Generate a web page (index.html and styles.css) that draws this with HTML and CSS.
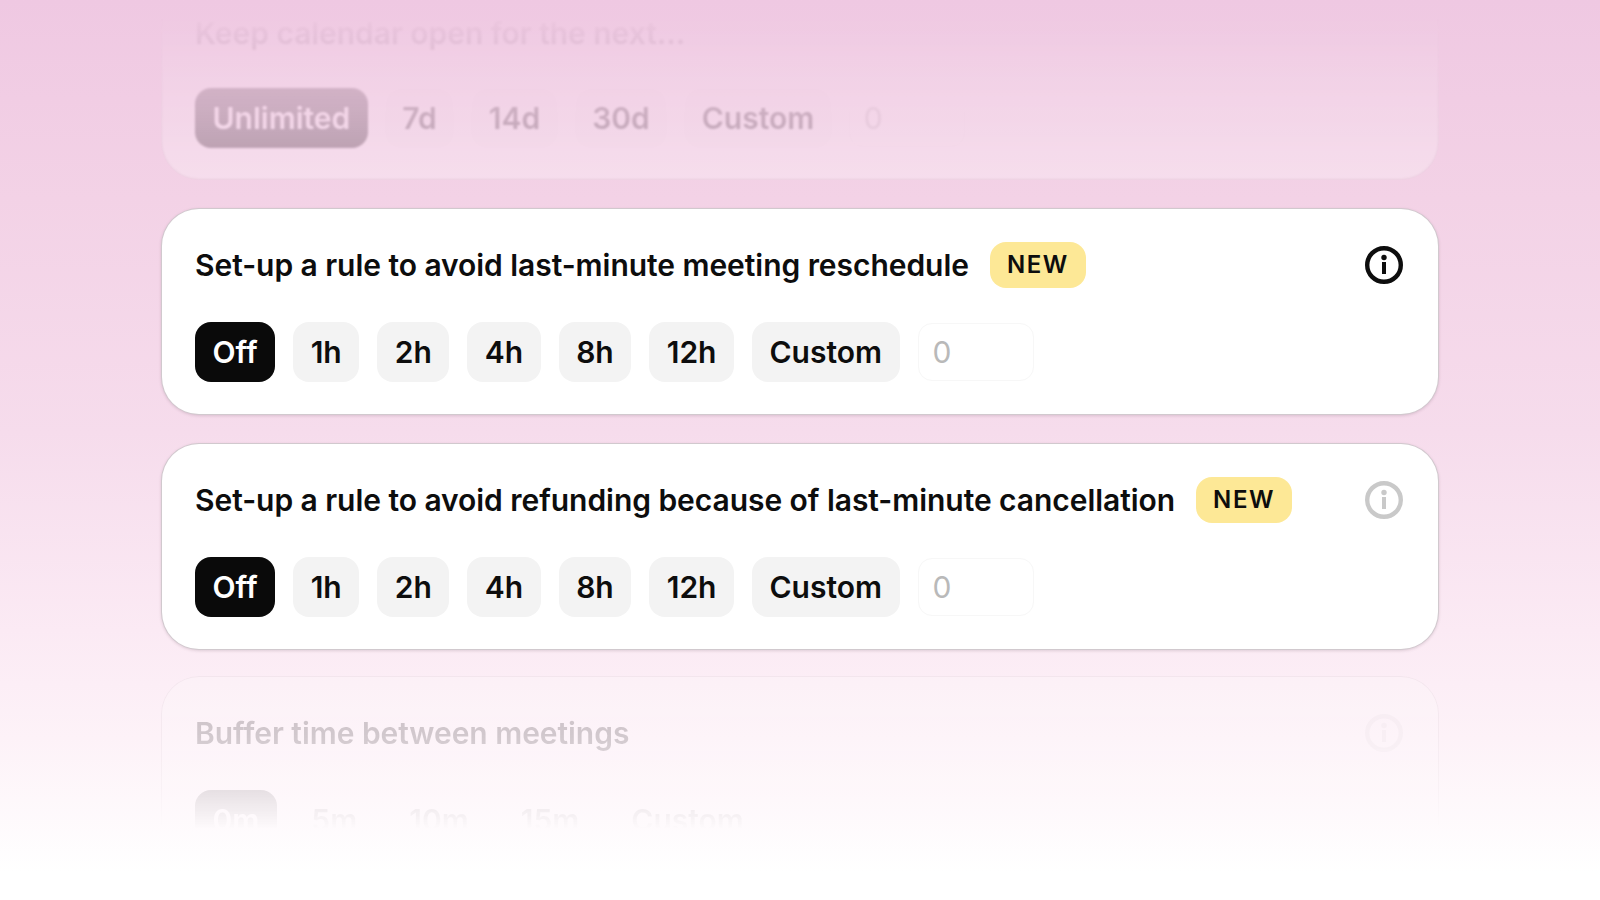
FILE: index.html
```html
<!DOCTYPE html>
<html lang="en">
<head>
    <meta charset="UTF-8">
    <meta name="viewport" content="width=device-width, initial-scale=1.0">
    <title>Booking rules</title>
    <link rel="stylesheet" href="styles.css">
</head>
<body>

    <div class="stack">

        <div class="card card-top">
            <div class="card-head">
                <span class="card-title">Keep calendar open for the next...</span>
            </div>
            <div class="options">
                <span class="pill active">Unlimited</span>
                <span class="pill">7d</span>
                <span class="pill">14d</span>
                <span class="pill">30d</span>
                <span class="pill">Custom</span>
                <span class="field">0</span>
            </div>
        </div>

        <div class="card">
            <div class="card-head">
                <span class="card-title">Set-up a rule to avoid last-minute meeting reschedule</span>
                <span class="badge">NEW</span>
                <svg class="info" viewBox="0 0 38 38" aria-hidden="true">
                    <circle cx="19" cy="19" r="16.8" fill="none" stroke="currentColor" stroke-width="4.4"/>
                    <circle cx="19" cy="11.5" r="2.7" fill="currentColor"/>
                    <rect x="17" y="16" width="4" height="12" fill="currentColor"/>
                </svg>
            </div>
            <div class="options">
                <span class="pill active">Off</span>
                <span class="pill">1h</span>
                <span class="pill">2h</span>
                <span class="pill">4h</span>
                <span class="pill">8h</span>
                <span class="pill">12h</span>
                <span class="pill">Custom</span>
                <span class="field">0</span>
            </div>
        </div>

        <div class="card">
            <div class="card-head">
                <span class="card-title">Set-up a rule to avoid refunding because of last-minute cancellation</span>
                <span class="badge">NEW</span>
                <svg class="info muted" viewBox="0 0 38 38" aria-hidden="true">
                    <circle cx="19" cy="19" r="16.8" fill="none" stroke="currentColor" stroke-width="4.4"/>
                    <circle cx="19" cy="11.5" r="2.7" fill="currentColor"/>
                    <rect x="17" y="16" width="4" height="12" fill="currentColor"/>
                </svg>
            </div>
            <div class="options">
                <span class="pill active">Off</span>
                <span class="pill">1h</span>
                <span class="pill">2h</span>
                <span class="pill">4h</span>
                <span class="pill">8h</span>
                <span class="pill">12h</span>
                <span class="pill">Custom</span>
                <span class="field">0</span>
            </div>
        </div>

        <div class="card card-bottom">
            <div class="card-head">
                <span class="card-title">Buffer time between meetings</span>
                <svg class="info muted" viewBox="0 0 38 38" aria-hidden="true">
                    <circle cx="19" cy="19" r="16.8" fill="none" stroke="currentColor" stroke-width="4.4"/>
                    <circle cx="19" cy="11.5" r="2.7" fill="currentColor"/>
                    <rect x="17" y="16" width="4" height="12" fill="currentColor"/>
                </svg>
            </div>
            <div class="options">
                <span class="pill active">0m</span>
                <span class="pill">5m</span>
                <span class="pill">10m</span>
                <span class="pill">15m</span>
                <span class="pill">Custom</span>
            </div>
        </div>

    </div>

</body>
</html>
```

FILE: styles.css
```css
* {
    box-sizing: border-box;
}
html, body {
    margin: 0;
    height: 100%;
}
body {
    font-family: 'Inter', 'Liberation Sans', sans-serif;
    color: #0d0d0d;
    overflow: hidden;
    background: linear-gradient(to bottom, #efc8e2 0%, #f3d2e6 22%, #f6dcec 48%, #fbeaf4 70%, #fdf2f8 82%, #ffffff 97%);
}
.stack {
    display: flex;
    flex-direction: column;
    gap: 28px;
    width: 1278px;
    margin: -27px auto 0;
}
.card {
    height: 207px;
    padding: 32px 33px 0;
    background: #fff;
    border: 1px solid rgba(90, 60, 80, 0.28);
    border-radius: 38px;
    box-shadow: 0 1px 3px rgba(90, 60, 80, 0.18);
}
.card-head {
    display: flex;
    align-items: center;
    height: 48px;
}
.card-title {
    font-size: 30px;
    font-weight: 600;
    letter-spacing: -0.05px;
    white-space: nowrap;
}
.badge {
    margin-left: 21px;
    padding: 0 17px;
    height: 46px;
    line-height: 46px;
    background: #fde896;
    border-radius: 16px;
    font-size: 24px;
    font-weight: 600;
    letter-spacing: 1.6px;
}
.info {
    width: 38px;
    height: 38px;
    margin-left: auto;
    margin-right: 2px;
}
.info.muted {
    color: #c9c9c9;
}
.options {
    display: flex;
    gap: 18px;
    margin-top: 33px;
}
.pill {
    height: 60px;
    line-height: 60px;
    padding: 0 17.5px;
    background: #f3f3f3;
    border-radius: 16px;
    font-size: 30px;
    font-weight: 600;
}
.pill.active {
    background: #0a0a0a;
    color: #fff;
}
.field {
    width: 116px;
    height: 58px;
    margin-top: 1px;
    line-height: 56px;
    padding: 0 14px;
    border: 1px solid #f7f7f7;
    border-radius: 14px;
    font-size: 30px;
    color: #b9b9b9;
}
.card-top {
    filter: blur(1px);
    -webkit-mask-image: linear-gradient(to bottom, rgba(0,0,0,0) 18%, rgba(0,0,0,0.04) 30%, rgba(0,0,0,0.12) 52%, rgba(0,0,0,0.18) 72%, rgba(0,0,0,0.28) 100%);
    mask-image: linear-gradient(to bottom, rgba(0,0,0,0) 18%, rgba(0,0,0,0.04) 30%, rgba(0,0,0,0.12) 52%, rgba(0,0,0,0.18) 72%, rgba(0,0,0,0.28) 100%);
}
.card-top .card-head {
    padding-top: 5px;
}
.card-top .options {
    margin-top: 33.5px;
    gap: 17px;
}
.card-bottom {
    margin-top: -2px;
    filter: blur(0.6px);
    -webkit-mask-image: linear-gradient(to bottom, rgba(0,0,0,0.2) 0%, rgba(0,0,0,0.18) 28%, rgba(0,0,0,0.1) 54%, rgba(0,0,0,0) 74%);
    mask-image: linear-gradient(to bottom, rgba(0,0,0,0.2) 0%, rgba(0,0,0,0.18) 28%, rgba(0,0,0,0.1) 54%, rgba(0,0,0,0) 74%);
}
.card-bottom .options {
    gap: 17px;
}
.card-bottom .info {
    opacity: 0.5;
}
.card-top .pill:not(.active),
.card-bottom .pill:not(.active) {
    background: #fbfbfb;
}
```
